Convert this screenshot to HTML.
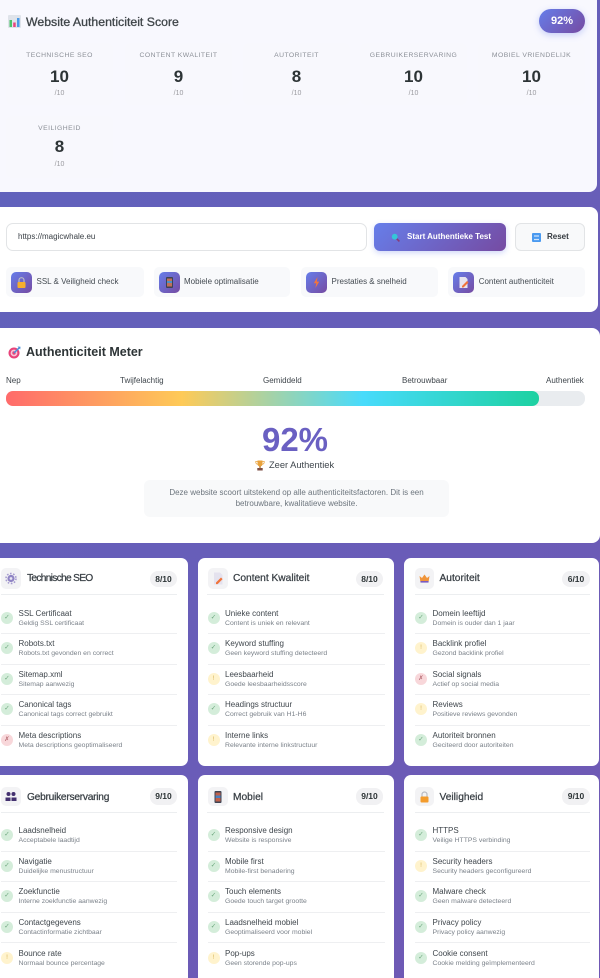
<!DOCTYPE html>
<html lang="nl"><head><meta charset="utf-8"><title>Website Authenticiteit Score</title>
<style>
*{box-sizing:border-box;margin:0;padding:0}
html,body{width:600px;height:978px;overflow:hidden}
body{position:relative;background:linear-gradient(135deg,#5f63bd,#7058b4);font-family:"Liberation Sans",sans-serif;color:#2d3436}
#w{position:absolute;left:0;top:0;width:600px;height:978px;overflow:hidden;filter:blur(.35px)}
.p{position:absolute}
.t{position:absolute;white-space:nowrap;line-height:12px;height:12px}
.panel{position:absolute;left:0;background:#fff}
.m{position:absolute;width:107px;height:62px;background:#f8f8fd;border-radius:6px;text-align:center}
.m span{position:absolute;left:0;width:100%;white-space:nowrap}
.m .l{top:7.5px;font-size:6.8px;letter-spacing:.45px;color:#8b8f97;line-height:10px}
.m .n{top:24px;font-size:17px;font-weight:bold;line-height:20px;color:#2d3436}
.m .d{top:46px;font-size:7px;color:#9a9a9f;line-height:10px}
.f{position:absolute;top:267px;height:30px;background:#f8f9fb;border-radius:5px}
.f u{position:absolute;left:5px;top:5px;width:21px;height:21px;border-radius:5px;background:linear-gradient(135deg,#667eea,#764ba2);display:block}
.f u svg{position:absolute;left:4px;top:4px}
.f em{position:absolute;top:9px;font-style:normal;font-size:8px;line-height:12px;color:#444b52;white-space:nowrap}
.c{position:absolute;background:#fff;border-radius:7px;height:208px;overflow:hidden}
.h{position:absolute;top:10px;width:20px;height:21px;border-radius:5px;background:#f3f3f5}
.h svg{position:absolute;left:4px;top:4px}
.ti{position:absolute;top:15px;font-size:10.2px;color:#3a4046;line-height:12px;white-space:nowrap;-webkit-text-stroke:.25px #3a4046}
.b{position:absolute;top:13px;width:27px;height:16px;border-radius:8px;background:#f1f1f3;font-size:8.5px;font-weight:bold;line-height:16px;text-align:center;color:#2d3436}
.dv{position:absolute;top:36px;height:1px;background:#eceef0}
.it{position:absolute;left:0;height:30.5px;border-bottom:1px solid #eeeff1}
.it:last-child{border-bottom:0}
.r1{top:45.5px}.r2{top:76px}.r3{top:106.5px}.r4{top:137px}.r5{top:168px}
.it i{position:absolute;left:0;top:8px;width:12px;height:12px;border-radius:50%;font-style:normal;font-size:6.5px;line-height:12px;text-align:center}
.g{background:#d4edda;color:#6aa57b}.y{background:#fff3cd;color:#d8b75e}.x{background:#f8d7da;color:#b56a72}
.it b{position:absolute;left:17.5px;top:4px;font-weight:normal;font-size:8px;line-height:12px;color:#3f464c;white-space:nowrap}
.it small{position:absolute;left:17.5px;top:15px;font-size:6.85px;line-height:10px;color:#7b828a;white-space:nowrap}
.w1{width:176px}.w2{width:177px}.w3{width:175px}
</style></head><body>
<div id="w">

<div class="panel" style="top:0;width:597px;height:192px;background:#f8f8fe;border-radius:0 0 8px 0"></div>
<svg class="p" style="left:8px;top:15px" width="13" height="13" viewBox="0 0 13 13"><rect width="13" height="13" rx="1" fill="#dfe3ea"/><rect x="1.5" y="5" width="2.5" height="7" fill="#4cc46a"/><rect x="5.2" y="7.5" width="2.5" height="4.5" fill="#e8457c"/><rect x="9" y="3" width="2.5" height="9" fill="#4a9ae8"/></svg>
<div class="t" style="left:26px;top:15px;font-size:12.3px;color:#3f4549;height:14px;line-height:14px;-webkit-text-stroke:.3px #3f4549">Website Authenticiteit Score</div>
<div class="p" style="left:539px;top:9px;width:46px;height:24px;border-radius:12px;background:linear-gradient(135deg,#667eea,#764ba2);box-shadow:0 2px 7px rgba(102,126,234,.35);color:#fff;font-size:11px;font-weight:bold;line-height:24px;text-align:center">92%</div>

<div class="m" style="left:6px;top:43px"><span class="l">TECHNISCHE SEO</span><span class="n">10</span><span class="d">/10</span></div>
<div class="m" style="left:125px;top:43px"><span class="l">CONTENT KWALITEIT</span><span class="n">9</span><span class="d">/10</span></div>
<div class="m" style="left:243px;top:43px"><span class="l">AUTORITEIT</span><span class="n">8</span><span class="d">/10</span></div>
<div class="m" style="left:360px;top:43px"><span class="l">GEBRUIKERSERVARING</span><span class="n">10</span><span class="d">/10</span></div>
<div class="m" style="left:478px;top:43px"><span class="l">MOBIEL VRIENDELIJK</span><span class="n">10</span><span class="d">/10</span></div>
<div class="m" style="left:6px;top:116px"><span class="l">VEILIGHEID</span><span class="n" style="top:21px">8</span><span class="d" style="top:44px">/10</span></div>

<div class="panel" style="top:207px;width:598px;height:105px;border-radius:0 8px 8px 0"></div>
<div class="p" style="left:6px;top:223px;width:361px;height:28px;border:1px solid #e2e4e6;border-radius:7px;background:#fff"></div>
<div class="t" style="left:18px;top:231px;font-size:8px;color:#3a4046">https://magicwhale.eu</div>
<div class="p" style="left:374px;top:223px;width:132px;height:28px;border-radius:6px;background:linear-gradient(135deg,#667eea,#764ba2);box-shadow:0 2px 6px rgba(102,126,234,.3)"></div>
<svg class="p" style="left:391px;top:233px" width="9" height="9" viewBox="0 0 9 9"><circle cx="3.7" cy="3.7" r="2.9" fill="#35c6d8"/><path d="M5.8 5.8L8.4 8.4" stroke="#8a3b78" stroke-width="1.6"/></svg>
<div class="t" style="left:407px;top:231px;font-size:8px;font-weight:bold;color:#fff">Start Authentieke Test</div>
<div class="p" style="left:515px;top:223px;width:70px;height:28px;border:1px solid #e2e4e6;border-radius:6px;background:#f8f9fa"></div>
<svg class="p" style="left:532px;top:233px" width="9" height="9" viewBox="0 0 9 9"><rect width="9" height="9" rx="1" fill="#4a9af0"/><path d="M2 3h5M2 6.5h5" stroke="#cfe4fb" stroke-width="1.2"/></svg>
<div class="t" style="left:547px;top:231px;font-size:8px;font-weight:bold;color:#33393e">Reset</div>

<div class="f" style="left:6px;width:138px"><u><svg width="13" height="13" viewBox="0 0 13 13"><path d="M4 6V4.2a2.5 2.5 0 0 1 5 0V6" fill="none" stroke="#b9bcc4" stroke-width="1.2"/><rect x="2.5" y="6" width="8" height="6" rx="1" fill="#f6ae2d"/></svg></u><em style="left:30.5px">SSL &amp; Veiligheid check</em></div>
<div class="f" style="left:154px;width:136px"><u><svg width="13" height="13" viewBox="0 0 13 13"><rect x="3" y="1" width="7" height="11" rx="1" fill="#3d4454"/><rect x="4" y="2.5" width="5" height="8" fill="#c0705a"/><rect x="4" y="5" width="5" height="2" fill="#4a90c8"/></svg></u><em style="left:30px">Mobiele optimalisatie</em></div>
<div class="f" style="left:301px;width:137px"><u><svg width="13" height="13" viewBox="0 0 13 13"><path d="M7.5 1L3.8 7.2h2.5L5.4 12l3.8-6.4H6.8z" fill="#f4743b"/></svg></u><em style="left:30.5px">Prestaties &amp; snelheid</em></div>
<div class="f" style="left:448px;width:137px"><u><svg width="13" height="13" viewBox="0 0 13 13"><path d="M2.5 1h6l2 2v9h-8z" fill="#e6e4ee"/><path d="M5 10l5-5 1.5 1.5-5 5H5z" fill="#f0743b"/></svg></u><em style="left:30.7px">Content authenticiteit</em></div>

<div class="panel" style="top:328px;width:600px;height:215px;border-radius:0 8px 8px 0"></div>
<svg class="p" style="left:8px;top:345px" width="13" height="14" viewBox="0 0 13 14"><circle cx="6" cy="8" r="5.5" fill="#e8437a"/><circle cx="6" cy="8" r="3.4" fill="#f9c6d6"/><circle cx="6" cy="8" r="1.7" fill="#e8437a"/><path d="M6 8l5-5" stroke="#4a90d8" stroke-width="1.5"/><path d="M9.5 1.5l3 .2-.3 2.8z" fill="#4a90d8"/></svg>
<div class="t" style="left:26px;top:345px;font-size:12.5px;font-weight:bold;height:14px;line-height:14px;color:#2d3436">Authenticiteit Meter</div>
<div class="t" style="left:6px;top:375px;font-size:8px;color:#3f464c">Nep</div>
<div class="t" style="left:120px;top:375px;font-size:8px;color:#3f464c">Twijfelachtig</div>
<div class="t" style="left:263px;top:375px;font-size:8px;color:#3f464c">Gemiddeld</div>
<div class="t" style="left:402px;top:375px;font-size:8px;color:#3f464c">Betrouwbaar</div>
<div class="t" style="left:546px;top:375px;font-size:8px;color:#3f464c">Authentiek</div>
<div class="p" style="left:6px;top:391px;width:579px;height:15px;border-radius:7px;background:#e9ecef"></div>
<div class="p" style="left:6px;top:391px;width:533px;height:15px;border-radius:7px;background:linear-gradient(90deg,#ff6b6b,#feca57 33%,#48dbfb 67%,#1dd1a1)"></div>
<div class="t" style="left:195px;top:421px;width:200px;height:38px;line-height:38px;text-align:center;font-size:33px;font-weight:bold;color:#6a60c2">92%</div>
<svg class="p" style="left:255px;top:460px" width="10" height="11" viewBox="0 0 10 11"><path d="M2.5 .5h5v3.5a2.5 2.5 0 0 1-5 0z" fill="#e9a23b"/><path d="M2.5 1.500H.7c0 2 1 2.700 2 2.800M7.500 1.500h1.800c0 2-1 2.700-2 2.800" fill="none" stroke="#e9a23b" stroke-width=".7"/><rect x="4.300" y="6" width="1.400" height="2" fill="#c08030"/><rect x="2.300" y="8" width="5.400" height="2.500" fill="#7d4f45"/></svg>
<div class="t" style="left:269px;top:459px;font-size:9.3px;color:#3f464c">Zeer Authentiek</div>
<div class="p" style="left:144px;top:480px;width:305px;height:37px;border-radius:6px;background:#f8f9fa"></div>
<div class="t" style="left:144px;top:487px;width:305px;text-align:center;font-size:8px;color:#6c757d">Deze website scoort uitstekend op alle authenticiteitsfactoren. Dit is een</div>
<div class="t" style="left:144px;top:498px;width:305px;text-align:center;font-size:8px;color:#6c757d">betrouwbare, kwalitatieve website.</div>

<!-- Row 1 -->
<div class="c" style="left:-9px;top:558px;width:197px">
<div class="h" style="left:10px"><svg width="12" height="13" viewBox="0 0 12 13"><circle cx="6" cy="6.500" r="3.600" fill="#8f84c4"/><circle cx="6" cy="6.500" r="5" fill="none" stroke="#a79dd0" stroke-width="1.600" stroke-dasharray="1.600 1.600"/><circle cx="6" cy="6.500" r="1.400" fill="#e8e6f4"/></svg></div>
<div class="ti" style="left:36px;letter-spacing:-.7px">Technische SEO</div><div class="b" style="left:159px">8/10</div><div class="dv w1" style="left:10px"></div>
<div class="p w1" style="left:10px;top:0;height:208px">
<div class="it w1 r1"><i class="g">✓</i><b>SSL Certificaat</b><small>Geldig SSL certificaat</small></div>
<div class="it w1 r2"><i class="g">✓</i><b>Robots.txt</b><small>Robots.txt gevonden en correct</small></div>
<div class="it w1 r3"><i class="g">✓</i><b>Sitemap.xml</b><small>Sitemap aanwezig</small></div>
<div class="it w1 r4"><i class="g">✓</i><b>Canonical tags</b><small>Canonical tags correct gebruikt</small></div>
<div class="it w1 r5"><i class="x">✗</i><b>Meta descriptions</b><small>Meta descriptions geoptimaliseerd</small></div>
</div></div>

<div class="c" style="left:198px;top:558px;width:196px">
<div class="h" style="left:9.500px"><svg width="12" height="13" viewBox="0 0 12 13"><path d="M2 .5h6l2.500 2.500v9.500H2z" fill="#e4e2ee"/><path d="M4 10.500l5-5 1.600 1.600-5 5H4z" fill="#f0743b"/></svg></div>
<div class="ti" style="left:35px">Content Kwaliteit</div><div class="b" style="left:158px">8/10</div><div class="dv w2" style="left:9px"></div>
<div class="p w2" style="left:9.500px;top:0;height:208px">
<div class="it w2 r1"><i class="g">✓</i><b>Unieke content</b><small>Content is uniek en relevant</small></div>
<div class="it w2 r2"><i class="g">✓</i><b>Keyword stuffing</b><small>Geen keyword stuffing detecteerd</small></div>
<div class="it w2 r3"><i class="y">!</i><b>Leesbaarheid</b><small>Goede leesbaarheidsscore</small></div>
<div class="it w2 r4"><i class="g">✓</i><b>Headings structuur</b><small>Correct gebruik van H1-H6</small></div>
<div class="it w2 r5"><i class="y">!</i><b>Interne links</b><small>Relevante interne linkstructuur</small></div>
</div></div>

<div class="c" style="left:403.500px;top:558px;width:195.500px">
<div class="h" style="left:11.500px;width:19px"><svg width="11" height="13" viewBox="0 0 11 13"><path d="M.5 4l2.500 2L5.500 2.500 8 6l2.500-2-1 6.500h-8z" fill="#f0953b"/><rect x="1.500" y="9" width="8" height="1.600" fill="#7a5bc0"/></svg></div>
<div class="ti" style="left:36px">Autoriteit</div><div class="b" style="left:158.500px;width:28px">6/10</div><div class="dv w3" style="left:11.500px"></div>
<div class="p w3" style="left:11.500px;top:0;height:208px">
<div class="it w3 r1"><i class="g">✓</i><b>Domein leeftijd</b><small>Domein is ouder dan 1 jaar</small></div>
<div class="it w3 r2"><i class="y">!</i><b>Backlink profiel</b><small>Gezond backlink profiel</small></div>
<div class="it w3 r3"><i class="x">✗</i><b>Social signals</b><small>Actief op social media</small></div>
<div class="it w3 r4"><i class="y">!</i><b>Reviews</b><small>Positieve reviews gevonden</small></div>
<div class="it w3 r5"><i class="g">✓</i><b>Autoriteit bronnen</b><small>Geciteerd door autoriteiten</small></div>
</div></div>

<!-- Row 2 -->
<div class="c" style="left:-9px;top:775px;width:197px;height:220px">
<div class="h" style="left:10px;top:12px;height:19px"><svg width="12" height="11" viewBox="0 0 12 11" style="top:4px"><circle cx="3.500" cy="3" r="2" fill="#43306f"/><circle cx="8.500" cy="3" r="2" fill="#43306f"/><path d="M.5 10V6.500h5V10zM6.500 10V6.500h5V10z" fill="#43306f"/></svg></div>
<div class="ti" style="left:36px;top:16.500px;letter-spacing:-.25px">Gebruikerservaring</div><div class="b" style="left:159px;top:13px;height:17px">9/10</div><div class="dv w1" style="left:10px;top:37px"></div>
<div class="p w1" style="left:10px;top:.5px;height:208px">
<div class="it w1 r1"><i class="g">✓</i><b>Laadsnelheid</b><small>Acceptabele laadtijd</small></div>
<div class="it w1 r2"><i class="g">✓</i><b>Navigatie</b><small>Duidelijke menustructuur</small></div>
<div class="it w1 r3"><i class="g">✓</i><b>Zoekfunctie</b><small>Interne zoekfunctie aanwezig</small></div>
<div class="it w1 r4"><i class="g">✓</i><b>Contactgegevens</b><small>Contactinformatie zichtbaar</small></div>
<div class="it w1 r5"><i class="y">!</i><b>Bounce rate</b><small>Normaal bounce percentage</small></div>
</div></div>

<div class="c" style="left:198px;top:775px;width:196px;height:220px">
<div class="h" style="left:9.500px;top:12px;height:19px"><svg width="12" height="12" viewBox="0 0 12 12" style="top:3.500px"><rect x="2.500" y="0" width="7" height="12" rx="1" fill="#3d4454"/><rect x="3.500" y="1.500" width="5" height="9" fill="#c0604a"/><rect x="3.500" y="4.500" width="5" height="2.500" fill="#4a80c0"/></svg></div>
<div class="ti" style="left:35px;top:16.500px">Mobiel</div><div class="b" style="left:158px;top:13px;height:17px">9/10</div><div class="dv w2" style="left:9px;top:37px"></div>
<div class="p w2" style="left:9.500px;top:.5px;height:208px">
<div class="it w2 r1"><i class="g">✓</i><b>Responsive design</b><small>Website is responsive</small></div>
<div class="it w2 r2"><i class="g">✓</i><b>Mobile first</b><small>Mobile-first benadering</small></div>
<div class="it w2 r3"><i class="g">✓</i><b>Touch elements</b><small>Goede touch target grootte</small></div>
<div class="it w2 r4"><i class="g">✓</i><b>Laadsnelheid mobiel</b><small>Geoptimaliseerd voor mobiel</small></div>
<div class="it w2 r5"><i class="y">!</i><b>Pop-ups</b><small>Geen storende pop-ups</small></div>
</div></div>

<div class="c" style="left:403.500px;top:775px;width:195.500px;height:220px">
<div class="h" style="left:11.500px;top:12px;width:19px;height:19px"><svg width="11" height="12" viewBox="0 0 11 12" style="top:3.500px"><path d="M3 5.500V3.500a2.500 2.500 0 0 1 5 0v2" fill="none" stroke="#b9bcc4" stroke-width="1.200"/><rect x="1.500" y="5.500" width="8" height="6" rx="1" fill="#f39c2d"/></svg></div>
<div class="ti" style="left:36px;top:16.500px">Veiligheid</div><div class="b" style="left:158.500px;top:13px;width:28px;height:17px">9/10</div><div class="dv w3" style="left:11.500px;top:37px"></div>
<div class="p w3" style="left:11.500px;top:.5px;height:208px">
<div class="it w3 r1"><i class="g">✓</i><b>HTTPS</b><small>Veilige HTTPS verbinding</small></div>
<div class="it w3 r2"><i class="y">!</i><b>Security headers</b><small>Security headers geconfigureerd</small></div>
<div class="it w3 r3"><i class="g">✓</i><b>Malware check</b><small>Geen malware detecteerd</small></div>
<div class="it w3 r4"><i class="g">✓</i><b>Privacy policy</b><small>Privacy policy aanwezig</small></div>
<div class="it w3 r5"><i class="g">✓</i><b>Cookie consent</b><small>Cookie melding geïmplementeerd</small></div>
</div></div>

</div>
</body></html>
